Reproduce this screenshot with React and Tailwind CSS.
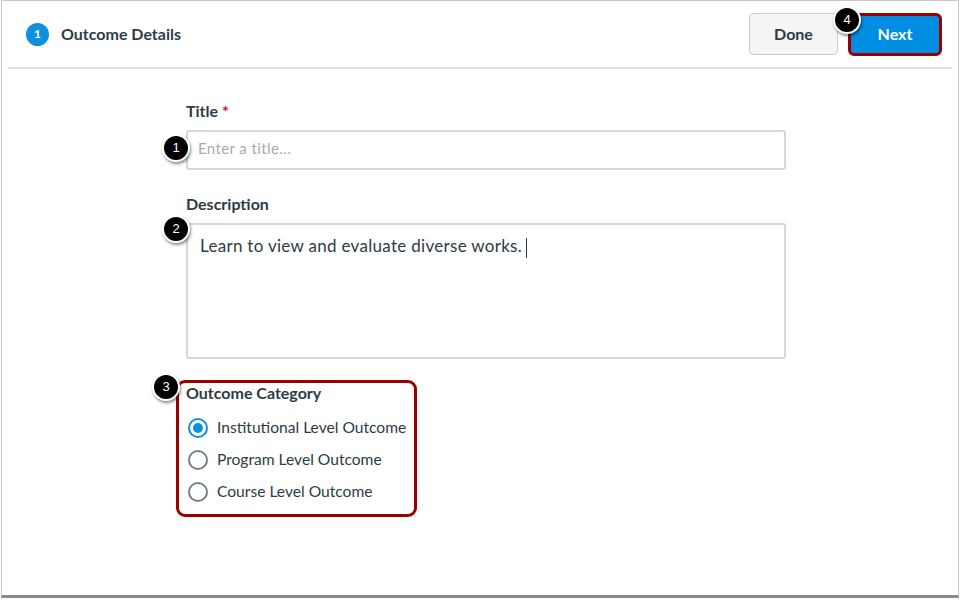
import React from "react";

function Badge({ n, className }) {
  return (
    <div
      className={`absolute flex items-center justify-center w-[28px] h-[28px] rounded-full bg-black border-2 border-white text-white text-[13px] shadow-[1px_2px_3px_rgba(0,0,0,0.45)] ${className}`}
      style={{ fontFamily: "'Liberation Sans', Arial, sans-serif" }}
    >
      {n}
    </div>
  );
}

function Radio({ checked, label }) {
  return (
    <div className="flex items-center h-[32px]">
      <div
        className={`ml-[2px] w-[20px] h-[20px] rounded-full border-2 flex items-center justify-center ${
          checked ? "border-[#0e8fdf]" : "border-[#73818c]"
        }`}
      >
        {checked && <div className="w-[10px] h-[10px] rounded-full bg-[#0e8fdf]" />}
      </div>
      <span className="ml-[9px] text-[15.6px] text-[#2d3b45]">{label}</span>
    </div>
  );
}

export default function App() {
  return (
    <div
      className="w-[961px] h-[601px] bg-white overflow-hidden"
      style={{ fontFamily: "Lato, 'Noto Sans', sans-serif" }}
    >
      <div className="relative ml-[1px] w-[958px] h-[598px] border-x border-t border-[#c8c8c8] border-b-[3px] border-b-[#8a8a8a] bg-white">
        {/* header */}
        <div className="mx-[6px] h-[68px] border-b-2 border-[#dfe2e5] flex items-center">
          <div className="ml-[18px] w-[23px] h-[23px] rounded-full bg-[#0e8fdf] text-white text-[12px] font-bold flex items-center justify-center">
            1
          </div>
          <div className="ml-[12px] text-[16px] font-bold text-[#2d3b45]">Outcome Details</div>
          <div className="ml-auto mr-[10px] flex items-center gap-[10px]">
            <button className="w-[89px] h-[42px] rounded-[4px] bg-[#f5f5f5] border border-[#c7cdd1] text-[16px] font-bold text-[#2d3b45]">
              Done
            </button>
            <div className="relative">
              <button className="w-[94px] h-[43px] rounded-[6px] bg-[#008ee2] border-[3px] border-[#900] text-[16px] font-bold text-white">
                Next
              </button>
              <Badge n="4" className="left-[-15px] top-[-7px]" />
            </div>
          </div>
        </div>

        {/* form */}
        <div className="ml-[184px] w-[600px] pt-[33px]">
          <div className="text-[16px] font-bold text-[#2d3b45] leading-[18px]">
            Title <span className="text-[#e0061f]">*</span>
          </div>
          <div className="relative mt-[10px]">
            <div className="h-[40px] border-2 border-[#d4d8db] rounded-[3px] flex items-center pl-[10px] pb-[3px] text-[15px] tracking-[0.4px] text-[#a5acb0]">
              Enter a title...
            </div>
            <Badge n="1" className="left-[-24px] top-[4px]" />
          </div>

          <div className="mt-[25px] text-[16px] font-bold text-[#2d3b45] leading-[18px]">Description</div>
          <div className="relative mt-[10px]">
            <div className="h-[136px] border-2 border-[#d4d8db] rounded-[3px] pl-[12px] pt-[8px] text-[17px] tracking-[0.3px] text-[#2d3b45]">
              Learn to view and evaluate diverse works.
              <span className="inline-block w-[1px] h-[20px] bg-[#2d3b45] align-middle ml-[4px]" />
            </div>
            <Badge n="2" className="left-[-24px] top-[-8px]" />
          </div>

          <div className="relative mt-[21px] ml-[-10px] w-[241px] h-[137px] border-[3px] border-[#900] rounded-[9px] pl-[7px] pt-0">
            <div className="text-[16px] font-bold text-[#2d3b45] leading-[20px]">Outcome Category</div>
            <div className="mt-[9px]">
              <Radio checked label="Institutional Level Outcome" />
              <Radio label="Program Level Outcome" />
              <Radio label="Course Level Outcome" />
            </div>
            <Badge n="3" className="left-[-27px] top-[-10px]" />
          </div>
        </div>
      </div>
    </div>
  );
}
